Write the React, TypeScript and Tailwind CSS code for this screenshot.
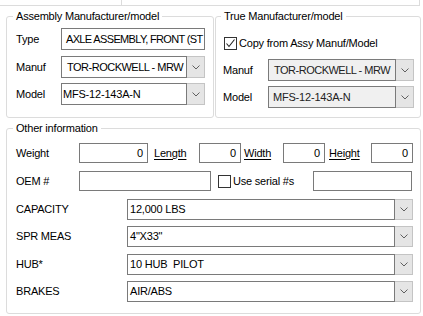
import React from 'react';

const Chevron = () => (
    <svg width="8" height="5" viewBox="0 0 8 5" className="block">
        <polyline points="0.5,0.5 4,4 7.5,0.5" fill="none" stroke="#606060" strokeWidth="1" />
    </svg>
);

const CheckBox = ({ checked }: { checked?: boolean }) => (
    <div className="w-[13px] h-[13px] border border-[#333333] bg-white flex items-center justify-center shrink-0">
        {checked && (
            <svg width="11" height="11" viewBox="0 0 11 11" className="block">
                <polyline points="1.5,5.5 4,8.5 9.5,1.5" fill="none" stroke="#222222" strokeWidth="1.1" />
            </svg>
        )}
    </div>
);

interface ComboProps {
    value: string;
    width: string;
    height: string;
    disabled?: boolean;
    pad?: string;
}

const Combo = ({ value, width, height, disabled, pad = 'pl-[2px]' }: ComboProps) => (
    <div className={`flex ${width} ${height}`}>
        <div
            className={`flex-1 flex items-center border border-[#7a7a7a] overflow-hidden whitespace-pre ${pad} ${
                disabled ? 'bg-[#f0f0f0] text-[#222222]' : 'bg-white'
            }`}
        >
            {value}
        </div>
        <div className="w-[18px] bg-[#e5e5e5] border border-l-0 border-[#c4c4c4] flex items-center justify-center">
            <Chevron />
        </div>
    </div>
);

const TextBox = ({ value, className, right }: { value?: string; className: string; right?: boolean }) => (
    <div
        className={`flex items-center border border-[#7a7a7a] bg-white overflow-hidden whitespace-nowrap ${
            right ? 'justify-end pr-[4px]' : 'pl-[4px]'
        } ${className}`}
    >
        {value}
    </div>
);

interface GroupProps {
    title: string;
    className: string;
    legend: string;
    children: React.ReactNode;
}

// fieldset/legend gives the WinForms group box look: title sitting on the top border
const Group = ({ title, className, legend, children }: GroupProps) => (
    <fieldset className={`border border-[#dcdcdc] rounded-[3px] ${className}`}>
        <legend className={`px-[3px] leading-[14px] ${legend}`}>{title}</legend>
        {children}
    </fieldset>
);

export default function App() {
    return (
        <div className="w-[423px] h-[316px] bg-white overflow-hidden text-[11px] text-black font-['Liberation_Sans',Arial,sans-serif] tracking-[-0.2px]">
            {/* strip left over from the section above */}
            <div className="flex w-[420px] h-[6px] border-b border-r border-[#dcdcdc]">
                <div className="w-[122px] border-r border-[#dcdcdc]"></div>
            </div>

            <div className="flex gap-[1px] pl-[6px] mt-[3px]">
                <Group title="Assembly Manufacturer/model" legend="-ml-[3px]" className="w-[208px] h-[109px] pl-[9px]">
                    <div className="flex flex-col mt-[5px] gap-[5px]">
                        <div className="flex items-center h-[22px]">
                            <span className="w-[45px]">Type</span>
                            <TextBox value="AXLE ASSEMBLY, FRONT (ST" className="w-[144px] h-[22px] !pl-[4px] tracking-[-0.65px]" />
                        </div>
                        <div className="flex items-center h-[22px] mt-[1px] tracking-[-0.5px]">
                            <span className="w-[45px] tracking-[-0.2px]">Manuf</span>
                            <Combo value="TOR-ROCKWELL - MRW" width="w-[144px]" height="h-[22px]" pad="pl-[5px]" />
                        </div>
                        <div className="flex items-center h-[22px]">
                            <span className="w-[45px]">Model</span>
                            <Combo value="MFS-12-143A-N" width="w-[144px]" height="h-[22px]" pad="pl-[1px]" />
                        </div>
                    </div>
                </Group>

                <Group title="True Manufacturer/model" legend="-ml-[2px]" className="w-[206px] h-[109px] pl-[7px]">
                    <div className="flex flex-col">
                        <div className="flex items-center h-[22px] mt-[9px] pl-[1px] gap-[2px]">
                            <CheckBox checked />
                            <span>Copy from Assy Manuf/Model</span>
                        </div>
                        <div className="flex items-center h-[22px] mt-[5px] tracking-[-0.5px]">
                            <span className="w-[45px] tracking-[-0.2px]">Manuf</span>
                            <Combo value="TOR-ROCKWELL - MRW" width="w-[146px]" height="h-[22px]" disabled pad="pl-[5px]" />
                        </div>
                        <div className="flex items-center h-[22px] mt-[5px]">
                            <span className="w-[45px]">Model</span>
                            <Combo value="MFS-12-143A-N" width="w-[146px]" height="h-[22px]" disabled pad="pl-[4px]" />
                        </div>
                    </div>
                </Group>
            </div>

            <div className="pl-[6px] mt-[3px]">
                <Group title="Other information" legend="-ml-[3px]" className="w-[415px] h-[193px] pl-[9px]">
                    <div className="flex items-center h-[20px] mt-[8px]">
                        <span className="w-[63px]">Weight</span>
                        <TextBox value="0" right className="w-[69px] h-[20px]" />
                        <span className="ml-[6px] w-[45px] underline underline-offset-2">Length</span>
                        <TextBox value="0" right className="w-[42px] h-[20px]" />
                        <span className="ml-[3px] w-[39px] underline underline-offset-2">Width</span>
                        <TextBox value="0" right className="w-[42px] h-[20px]" />
                        <span className="ml-[4px] w-[42px] underline underline-offset-2">Height</span>
                        <TextBox value="0" right className="w-[42px] h-[20px]" />
                    </div>

                    <div className="flex items-center h-[20px] mt-[8px]">
                        <span className="w-[63px]">OEM #</span>
                        <TextBox className="w-[132px] h-[20px]" />
                        <div className="ml-[7px] flex items-center gap-[2px] w-[95px]">
                            <CheckBox />
                            <span>Use serial #s</span>
                        </div>
                        <TextBox className="w-[99px] h-[20px]" />
                    </div>

                    <div className="flex items-center h-[21px] mt-[8px]">
                        <span className="w-[111px]">CAPACITY</span>
                        <Combo value="12,000 LBS" width="w-[286px]" height="h-[21px]" />
                    </div>
                    <div className="flex items-center h-[21px] mt-[6px]">
                        <span className="w-[111px]">SPR MEAS</span>
                        <Combo value={'4"X33"'} width="w-[286px]" height="h-[21px]" />
                    </div>
                    <div className="flex items-center h-[21px] mt-[7px]">
                        <span className="w-[111px]">HUB*</span>
                        <Combo value="10 HUB  PILOT" width="w-[286px]" height="h-[21px]" />
                    </div>
                    <div className="flex items-center h-[21px] mt-[6px]">
                        <span className="w-[111px]">BRAKES</span>
                        <Combo value="AIR/ABS" width="w-[286px]" height="h-[21px]" />
                    </div>
                </Group>
            </div>
        </div>
    );
}
